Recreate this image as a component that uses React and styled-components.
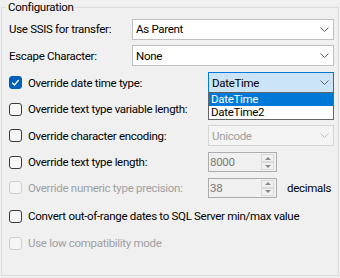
import React from 'react'
import styled, { createGlobalStyle } from 'styled-components'

const GlobalStyle = createGlobalStyle`
  html, body {
    margin: 0;
    padding: 0;
    background: #f0f0f0;
  }
  body {
    width: 340px;
    height: 278px;
    overflow: hidden;
    font-family: Roboto, "Liberation Sans", sans-serif;
    font-size: 11.5px;
    letter-spacing: -0.3px;
    color: #000;
  }
`

const Group = styled.fieldset`
  margin: 0 0 0 1px;
  width: 338px;
  height: 276px;
  box-sizing: border-box;
  border: 1px solid #dcdcdc;
  padding: 2px 4px 0 7px;
  min-width: 0;
`

const Legend = styled.legend`
  padding: 0 2px;
  margin-left: -3px;
  line-height: 14px;
`

const Row = styled.div`
  display: flex;
  align-items: center;
  height: ${(p) => p.$h}px;
`

const FieldLabel = styled.span`
  width: 123px;
  flex: none;
  white-space: nowrap;
`

const CheckLabel = styled.label`
  display: flex;
  align-items: center;
  gap: 6px;
  width: ${(p) => (p.$wide ? 'auto' : '199px')};
  flex: none;
  white-space: nowrap;
  color: ${(p) => (p.$disabled ? '#a0a0a0' : '#000')};
`

const Box = styled.span`
  width: 13px;
  height: 13px;
  box-sizing: border-box;
  border-radius: 3px;
  flex: none;
  display: flex;
  align-items: center;
  justify-content: center;
  background: ${(p) => (p.$checked ? '#005fb8' : p.$disabled ? '#f5f5f5' : '#f7f7f7')};
  border: 1px solid
    ${(p) => (p.$checked ? '#005fb8' : p.$disabled ? '#cdcdcd' : '#3a3a3a')};
`

const Combo = styled.div`
  position: relative;
  flex: 1;
  height: 21px;
  box-sizing: border-box;
  display: flex;
  align-items: center;
  padding: 0 4px 0 3px;
  border: 1px solid ${(p) => (p.$open ? '#0078d7' : p.$disabled ? '#d4d4d4' : '#bfbfbf')};
  background: ${(p) => (p.$open ? '#cce4f7' : p.$disabled ? '#f4f4f4' : '#fff')};
  color: ${(p) => (p.$disabled ? '#a0a0a0' : '#000')};
`

const ComboText = styled.span`
  flex: 1;
`

const Chevron = styled.svg`
  width: 9px;
  height: 5px;
  flex: none;
`

const DropList = styled.ul`
  position: absolute;
  top: 100%;
  left: -1px;
  right: -1px;
  margin: 0;
  padding: 0;
  list-style: none;
  background: #fff;
  border: 1px solid #646464;
  z-index: 2;
`

const DropItem = styled.li`
  height: 13px;
  line-height: 13px;
  padding-left: 2px;
  background: ${(p) => (p.$selected ? '#0078d7' : '#fff')};
  color: ${(p) => (p.$selected ? '#fff' : '#000')};
`

const Spinner = styled.div`
  width: 69px;
  height: 20px;
  box-sizing: border-box;
  border: 1px solid #adadad;
  display: flex;
  align-items: center;
  padding: 0 2px 0 1px;
  background: #f0f0f0;
`

const SpinValue = styled.span`
  flex: 1;
  color: #7a7a7a;
`

const SpinButtons = styled.div`
  display: flex;
  flex-direction: column;
  width: 13px;
  height: 16px;
`

const SpinButton = styled.div`
  flex: 1;
  box-sizing: border-box;
  border: 1px solid #dadada;
  display: flex;
  align-items: center;
  justify-content: center;
  &::after {
    content: '';
    border-left: 3px solid transparent;
    border-right: 3px solid transparent;
    ${(p) => (p.$down ? 'border-top: 3px solid #8a8a8a;' : 'border-bottom: 3px solid #8a8a8a;')}
  }
`

const Unit = styled.span`
  margin-left: 10px;
`

const ChevronIcon = ({ color = '#606060' }) => (
  <Chevron viewBox="0 0 9 5">
    <polyline points="0.5,0.5 4.5,4.5 8.5,0.5" fill="none" stroke={color} strokeWidth="1" />
  </Chevron>
)

const CheckBox = ({ checked, disabled }) => (
  <Box $checked={checked} $disabled={disabled}>
    {checked && (
      <svg width="9" height="9" viewBox="0 0 9 9">
        <polyline points="1.2,4.8 3.4,7 7.8,2" fill="none" stroke="#fff" strokeWidth="1.3" />
      </svg>
    )}
  </Box>
)

const NumberBox = ({ value }) => (
  <Spinner>
    <SpinValue>{value}</SpinValue>
    <SpinButtons>
      <SpinButton />
      <SpinButton $down />
    </SpinButtons>
  </Spinner>
)

const App = () => {
  return (
    <>
      <GlobalStyle />
      <Group>
        <Legend>Configuration</Legend>
        <Row $h={26}>
          <FieldLabel>Use SSIS for transfer:</FieldLabel>
          <Combo>
            <ComboText>As Parent</ComboText>
            <ChevronIcon />
          </Combo>
        </Row>
        <Row $h={27}>
          <FieldLabel>Escape Character:</FieldLabel>
          <Combo>
            <ComboText>None</ComboText>
            <ChevronIcon />
          </Combo>
        </Row>
        <Row $h={27}>
          <CheckLabel>
            <CheckBox checked />
            Override date time type:
          </CheckLabel>
          <Combo $open>
            <ComboText>DateTime</ComboText>
            <ChevronIcon />
            <DropList>
              <DropItem $selected>DateTime</DropItem>
              <DropItem>DateTime2</DropItem>
            </DropList>
          </Combo>
        </Row>
        <Row $h={26}>
          <CheckLabel $wide>
            <CheckBox />
            Override text type variable length:
          </CheckLabel>
        </Row>
        <Row $h={27}>
          <CheckLabel>
            <CheckBox />
            Override character encoding:
          </CheckLabel>
          <Combo $disabled>
            <ComboText>Unicode</ComboText>
            <ChevronIcon color="#c4c4c4" />
          </Combo>
        </Row>
        <Row $h={26}>
          <CheckLabel>
            <CheckBox />
            Override text type length:
          </CheckLabel>
          <NumberBox value="8000" />
        </Row>
        <Row $h={25}>
          <CheckLabel $disabled>
            <CheckBox disabled />
            Override numeric type precision:
          </CheckLabel>
          <NumberBox value="38" />
          <Unit>decimals</Unit>
        </Row>
        <Row $h={32}>
          <CheckLabel $wide>
            <CheckBox />
            Convert out-of-range dates to SQL Server min/max value
          </CheckLabel>
        </Row>
        <Row $h={22}>
          <CheckLabel $wide $disabled>
            <CheckBox disabled />
            Use low compatibility mode
          </CheckLabel>
        </Row>
      </Group>
    </>
  )
}

export default App
